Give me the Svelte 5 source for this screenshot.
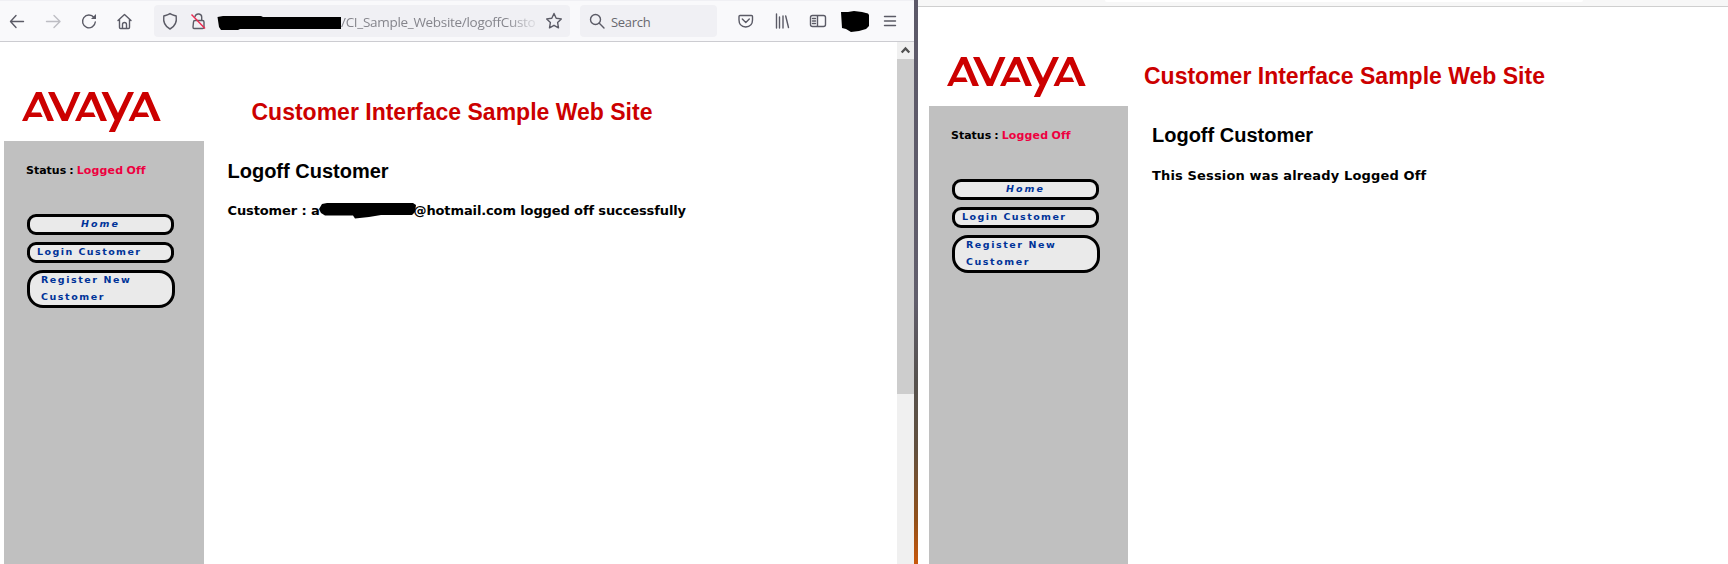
<script>
  const links = ['Home', 'Login Customer', 'Register New Customer'];
</script>

{#snippet logo()}
  <svg class="logo" width="139" height="40" viewBox="0 0 139 40" fill="#cc0000" role="img" aria-label="Avaya">
    <path d="M0 29L14 0H19.6L32 29H25.6L16.3 7L9.3 20.5H18.5L20.7 25H7L5.2 29Z" />
    <path d="M26 0H32.4L43.2 22L52.6 0H58.5L45.7 29H39.9Z" />
    <path d="M53 29L67 0H72.6L85 29H78.6L69.3 7L62.3 20.5H71.5L73.7 25H60L58.2 29Z" />
    <path d="M79.5 0H85.9L96 21L106 0H112L93 40H86.8L92.6 28Z" />
    <path d="M106.5 29L120.5 0H126.1L138.7 29H132.1L122.8 7L115.8 20.5H125L127.2 25H113.5L111.7 29Z" />
  </svg>
{/snippet}

{#snippet site(side, message)}
  <div class="site {side}">
    <header>
      <div class="brand">{@render logo()}</div>
      <h1>Customer Interface Sample Web Site</h1>
    </header>
    <div class="columns">
      <aside>
        <div class="status">Status : <span>Logged Off</span></div>
        <nav>
          {#each links as link, i}
            <a class="link l{i}" href="#top"><span>{link}</span></a>
          {/each}
        </nav>
      </aside>
      <main>
        <h2>Logoff Customer</h2>
        <p>{@render message()}</p>
      </main>
    </div>
  </div>
{/snippet}

{#snippet leftMessage()}Customer : a<svg class="mask" width="97" height="16" viewBox="0 0 97 16"><path d="M3 1L8 0H94L97 2L96 9L93 12L62 12L50 14L36 15.5L34 12.5L6 12.5L2 10L0 6Z" /></svg>@hotmail.com logged off successfully{/snippet}
{#snippet rightMessage()}This Session was already Logged Off{/snippet}

<div class="desktop">
  <section class="window first">
    <div class="toolbar">
      <svg class="ic" width="154" height="41" viewBox="0 0 154 41">
        <g class="line">
          <path d="M23.5 21.5H10.5M16 15.5L10.5 21.5L16 27.5" />
          <path class="dim" d="M46.5 21.5H59.5M54 15.5L60 21.5L54 27.5" />
          <path d="M94 17.5A6.4 6.4 0 1 0 95.3 22" />
          <path d="M118 20.5L124.5 14.5L131 20.5M119.5 19.5V27.5Q119.5 28.5 120.5 28.5H128.5Q129.5 28.5 129.5 27.5V19.5M122.5 28V24.5Q122.5 22.5 124.5 22.5Q126.5 22.5 126.5 24.5V28" />
        </g>
        <path fill="#5b5b66" d="M96 14V19H91Z" />
      </svg>
      <div class="address">
        <svg width="187" height="32" viewBox="0 0 187 32">
          <g class="line">
            <path d="M16 8.5C13.5 10.5 11.5 10.3 9.8 11C9 17 11 21.5 16 24C21 21.5 23 17 22.2 11C20.5 10.3 18.5 10.5 16 8.5Z" />
            <path d="M39.5 17Q39.5 15.5 41 15.5H48.5Q50 15.5 50 17V22Q50 23.5 48.5 23.5H40Q39 23.5 39 22ZM41 11.5Q42 8.5 45 9Q47.7 9.5 47.7 12V15" />
          </g>
          <path d="M37.5 9.5L51 23.5" stroke="#ee2950" stroke-width="1.4" />
          <path d="M63.5 12L69 11L107 11L109 12L187 12V24H86L84 25L67 25L65 22Z" />
        </svg>
        <span class="url">/CI_Sample_Website/logoffCusto</span>
        <svg class="star" width="18" height="18" viewBox="0 0 18 18">
          <path class="line" d="M9 1.5L11.2 6.2L16.3 6.9L12.6 10.5L13.5 15.8L9 13.3L4.5 15.8L5.4 10.5L1.7 6.9L6.8 6.2Z" />
        </svg>
      </div>
      <div class="search">
        <svg width="16" height="16" viewBox="0 0 16 16"><g class="line"><circle cx="6.5" cy="6.5" r="5" /><path d="M10.3 10.3L15 15" /></g></svg>
        <span>Search</span>
      </div>
      <svg class="tools" width="197" height="41" viewBox="717 0 197 41">
        <g class="line">
          <path d="M740 15.5H751.5Q752.5 15.5 752.5 16.5V20Q752.5 26.5 745.7 27Q739 26.5 739 20V16.5Q739 15.5 740 15.5ZM742.3 19L745.8 22.4L749.3 19" />
          <path d="M776.5 14V28M779.5 17V28M783 16V28M785.7 16L788.5 27.5" />
          <path d="M812.5 15.5H823.5Q825.5 15.5 825.5 17.5V24.5Q825.5 26.5 823.5 26.5H812.5Q810.5 26.5 810.5 24.5V17.5Q810.5 15.5 812.5 15.5ZM817.5 16V26M812.5 18.5H815.5M812.5 21H815.5M812.5 23.5H815.5" />
          <path d="M884.5 16.5H895.5M884.5 21H895.5M884.5 25.5H895.5" />
        </g>
        <path d="M841 12H848L854 11L862 12L868 13.5L869 15V26L866 29L859 31L851 32L846 29L842 28Z" />
      </svg>
    </div>
    <div class="view">
      {@render site('west', leftMessage)}
      <div class="scroll">
        <svg width="17" height="17" viewBox="0 0 17 17"><path d="M4.7 10.5L8.5 6.5L12.3 10.5" fill="none" stroke="#505050" stroke-width="2.3" /></svg>
        <div class="thumb"></div>
      </div>
    </div>
  </section>
  <div class="gap"></div>
  <section class="window second">
    <div class="strip"><div class="field"></div></div>
    {@render site('east', rightMessage)}
  </section>
</div>

<style>
  :global(body) { margin: 0; overflow: hidden; background: #fff; }
  .desktop { display: flex; width: 1728px; height: 564px; overflow: hidden; background: #fff; color: #000; }
  .window { display: flex; flex-direction: column; height: 564px; overflow: hidden; }
  .first { width: 914px; }
  .second { width: 810px; }
  svg { display: block; flex: none; }
  .line { fill: none; stroke: #5b5b66; stroke-width: 1.4; stroke-linecap: round; stroke-linejoin: round; }
  .dim { stroke: #bdbdc3; }
  .toolbar { display: flex; box-sizing: border-box; height: 42px; flex: none; background: #f9f9fb; border-bottom: 1px solid #ccccd1; box-shadow: inset 0 1px #f0f0f4; }
  .address { display: flex; box-sizing: border-box; width: 416px; height: 32px; margin-top: 5px; border-radius: 4px; background: #f0f0f4; }
  .url { width: 198px; white-space: nowrap; font: 13.5px/34px "Open Sans", sans-serif; letter-spacing: -0.3px; color: #85858c; mask-image: linear-gradient(to right, #000 165px, transparent 200px); }
  .star { margin: 7px 0 0 6px; }
  .search { display: flex; width: 137px; height: 32px; margin: 5px 0 0 10px; border-radius: 4px; background: #f0f0f4; }
  .search svg { margin: 8px 6px 0 9px; }
  .search span { font: 13px/35px "Open Sans", sans-serif; letter-spacing: -0.3px; color: #68686f; }
  .view { display: flex; flex: 1; }
  .scroll { width: 17px; background: #f0f0f0; }
  .thumb { height: 335px; background: #cdcdcd; }
  .gap { width: 4px; background: linear-gradient(#5c5968 0, #625f6d 300px, #56524f 380px, #62503e 450px, #925019 520px, #c9580c 564px); }
  .strip { display: flex; box-sizing: border-box; height: 7px; background: #f7f7f7; border-bottom: 1px solid #cfcfcf; }
  .field { width: 478px; height: 2px; margin-left: 187px; border-radius: 0 0 4px 4px; background: #fff; }
  .site { display: flex; flex-direction: column; flex: 1; }
  .west { padding-left: 4px; }
  .east { padding-left: 11px; }
  header { display: flex; height: 99px; flex: none; }
  .brand { width: 247.5px; }
  .east .brand { width: 215px; }
  .logo { margin: 50px 0 0 17.5px; }
  h1 { margin: 56px 0 0; font: bold 23px/28px "Liberation Sans", Arial, sans-serif; color: #cc0000; white-space: nowrap; }
  .east h1 { margin-top: 55px; }
  .columns { display: flex; flex: 1; }
  aside { width: 200px; background: #c0c0c0; }
  .east aside { width: 199px; }
  .status { margin: 23px 0 0 22px; font: bold 11px/14px Verdana, "DejaVu Sans", sans-serif; word-spacing: -0.8px; white-space: nowrap; }
  .status span { color: #ee0040; letter-spacing: 0.15px; }
  nav { display: flex; flex-direction: column; gap: 7px; margin: 36px 0 0 23px; }
  .link { box-sizing: border-box; width: 147px; height: 21px; border: 3px solid #000; border-radius: 9px; background: #eaeaea; color: #003399; font: bold 9.5px/14px Verdana, "DejaVu Sans", sans-serif; letter-spacing: 1.45px; text-decoration: none; }
  .l0 { text-align: center; font-style: italic; letter-spacing: 2px; }
  .l1 { padding-left: 7px; }
  .l2 { width: 148px; height: 38px; padding: 0 30px 0 11px; border-radius: 16px; line-height: 17px; letter-spacing: 1.55px; }
  .l2 span { display: block; margin-top: -2px; }
  main { margin-left: 23.5px; }
  .east main { margin-left: 24px; }
  h2 { margin: 18px 0 0; font: bold 20px/24px "Liberation Sans", Arial, sans-serif; white-space: nowrap; }
  .east h2 { margin-top: 17px; }
  p { display: flex; align-items: center; margin: 20px 0 0; font: bold 13px/16px Verdana, "DejaVu Sans", sans-serif; letter-spacing: -0.12px; white-space: pre; }
  .east p { margin-top: 21px; letter-spacing: 0.15px; }
  .mask { margin: 0 -2px 0 -1px; }
</style>
